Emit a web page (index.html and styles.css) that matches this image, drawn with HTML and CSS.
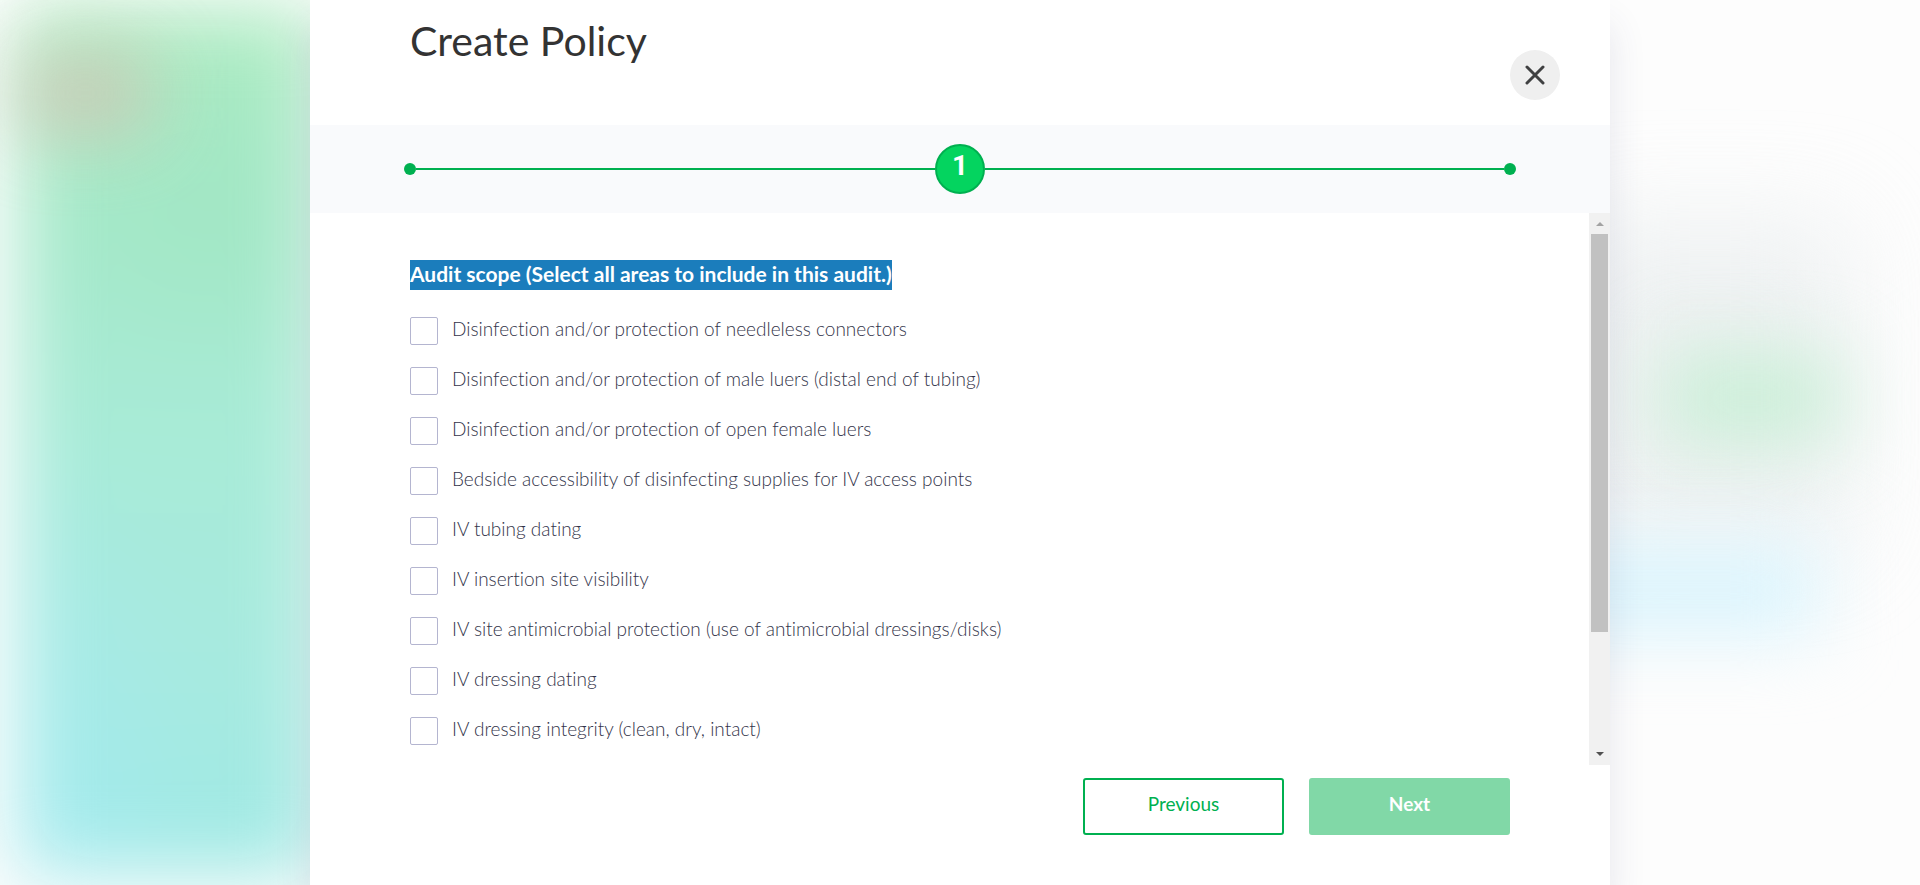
FILE: index.html
```html
<!DOCTYPE html>
<html lang="en">
<head>
<meta charset="utf-8">
<meta name="viewport" content="width=device-width, initial-scale=1">
<title>Create Policy</title>
<link rel="stylesheet" href="styles.css">
</head>
<body>
<div class="backdrop" aria-hidden="true">
  <div class="blob blob-panel"></div>
  <div class="blob blob-warm"></div>
  <div class="blob blob-haze"></div>
  <div class="blob blob-green"></div>
  <div class="blob blob-blue"></div>
</div>
<main class="modal" role="dialog" aria-labelledby="title">
  <header class="modal-header">
    <h1 class="title" id="title">Create Policy</h1>
    <button class="close" type="button" aria-label="Close">
      <svg width="20" height="20" viewBox="0 0 20 20" fill="none" stroke="#3f4041" stroke-width="3" stroke-linecap="round"><path d="M2 2l16 16M18 2L2 18"/></svg>
    </button>
  </header>
  <nav class="steps" aria-label="Progress">
    <span class="dot"></span>
    <span class="line"></span>
    <span class="step">1</span>
    <span class="line"></span>
    <span class="dot"></span>
  </nav>
  <div class="body">
    <form class="scope" id="scope">
      <h2 class="question"><span class="selected">Audit scope (Select all areas to include in this audit.)</span></h2>
      <label class="option"><input class="check" type="checkbox"><span class="text">Disinfection and/or protection of needleless connectors</span></label>
      <label class="option"><input class="check" type="checkbox"><span class="text">Disinfection and/or protection of male luers (distal end of tubing)</span></label>
      <label class="option"><input class="check" type="checkbox"><span class="text">Disinfection and/or protection of open female luers</span></label>
      <label class="option"><input class="check" type="checkbox"><span class="text">Bedside accessibility of disinfecting supplies for IV access points</span></label>
      <label class="option"><input class="check" type="checkbox"><span class="text">IV tubing dating</span></label>
      <label class="option"><input class="check" type="checkbox"><span class="text">IV insertion site visibility</span></label>
      <label class="option"><input class="check" type="checkbox"><span class="text">IV site antimicrobial protection (use of antimicrobial dressings/disks)</span></label>
      <label class="option"><input class="check" type="checkbox"><span class="text">IV dressing dating</span></label>
      <label class="option"><input class="check" type="checkbox"><span class="text">IV dressing integrity (clean, dry, intact)</span></label>
    </form>
    <div class="scrollbar" aria-hidden="true">
      <svg class="arrow" viewBox="0 0 21 21"><path d="M7 13h8l-4-4z" fill="#a3a3a3"/></svg>
      <div class="track"><div class="thumb"></div></div>
      <svg class="arrow" viewBox="0 0 21 21"><path d="M7 8h8l-4 4z" fill="#505050"/></svg>
    </div>
  </div>
  <footer class="actions">
    <button class="btn btn-outline" type="button">Previous</button>
    <button class="btn btn-primary" type="submit" form="scope">Next</button>
  </footer>
</main>
</body>
</html>
```

FILE: styles.css
```css
* { box-sizing: border-box; }

body {
  margin: 0;
  min-height: 100vh;
  display: flex;
  justify-content: center;
  background: #fdfdfd;
  font-family: Lato, "Liberation Sans", sans-serif;
  font-variant-ligatures: none;
  overflow: hidden;
}

/* Blurred page behind the dialog */
.backdrop { position: absolute; inset: 0; overflow: hidden; }
.blob { position: absolute; filter: blur(38px); }
.blob-panel {
  left: 18px; top: 8px; bottom: 10px; width: 300px;
  background:
    radial-gradient(ellipse 170px 180px at 190px 190px, rgba(160, 230, 194, .8), transparent),
    radial-gradient(ellipse 190px 480px at 0 100%, rgba(165, 235, 243, .8), transparent),
    linear-gradient(180deg, #aeecc0 0%, #a6e9cb 25%, #a8ebd7 50%, #a7eadf 75%, #9fe9e5 100%);
}
.blob-warm { left: 20px; top: 52px; width: 130px; height: 82px; background: #d2c4b4; opacity: .8; }
.blob-haze { left: 1570px; top: 220px; width: 280px; height: 330px; background: #e6ebec; opacity: .65; filter: blur(50px); }
.blob-green { left: 1660px; top: 352px; width: 180px; height: 92px; background: #cbefd8; }
.blob-blue { left: 1500px; top: 545px; width: 320px; height: 90px; background: #daf4fd; }

.modal {
  position: relative;
  width: 1300px;
  max-width: 100%;
  display: flex;
  flex-direction: column;
  background: #fff;
  box-shadow: 0 25px 35px rgba(60, 60, 110, .12);
}

.modal-header {
  height: 125px;
  flex: none;
  display: flex;
  justify-content: space-between;
  align-items: flex-start;
  padding: 16px 50px 0 100px;
}
.title { margin: 0; font-size: 41px; line-height: 50px; font-weight: 400; color: #333; }
.close {
  display: grid;
  place-items: center;
  width: 50px;
  height: 50px;
  margin-top: 34px;
  padding: 0;
  border: 0;
  border-radius: 50%;
  background: #efefef;
}

.steps {
  height: 88px;
  flex: none;
  display: flex;
  align-items: center;
  padding: 0 94px;
  background: #f9fafc;
}
.dot { width: 12px; height: 12px; border-radius: 50%; background: #00b050; }
.line { flex: 1; height: 2px; background: #00b050; }
.step {
  width: 50px;
  height: 50px;
  border: 2px solid #00b050;
  border-radius: 50%;
  background: #04d45f;
  color: #fff;
  font: 700 28px/40px Roboto, sans-serif;
  text-align: center;
}

.body { flex: 1; min-height: 0; display: flex; }
.scope { flex: 1; padding: 47px 100px 0; overflow: hidden; }
.question { margin: 0 0 16px; font-size: 21px; font-weight: 700; line-height: 30px; }
.selected { display: block; width: fit-content; height: 30px; line-height: 27px; background: #1b7dbc; color: #fff; }
.option { display: flex; align-items: center; gap: 14px; height: 50px; color: #33344a; }
.check {
  appearance: none;
  flex: none;
  width: 28px;
  height: 28px;
  margin: 0;
  border: 1px solid #b4b5d0;
  border-radius: 2px;
  background: #fff;
}
.text { font-size: 19px; line-height: 24px; font-weight: 300; padding-bottom: 4px; }

.scrollbar { width: 21px; display: flex; flex-direction: column; background: #f1f1f1; }
.arrow { width: 21px; height: 21px; flex: none; }
.track { flex: 1; padding: 0 2px; }
.thumb { height: 78%; background: #c1c1c1; }

.actions { flex: none; display: flex; justify-content: flex-end; gap: 25px; padding: 13px 100px 50px; }
.btn {
  width: 201px;
  height: 57px;
  padding: 0 0 6px;
  border: 2px solid #00b050;
  border-radius: 3px;
  font-family: inherit;
  font-size: 19px;
  line-height: 24px;
}
.btn-outline { background: #fff; color: #00b050; }
.btn-primary { border-color: #81d8a7; background: #81d8a7; color: #fff; font-weight: 700; }
```
